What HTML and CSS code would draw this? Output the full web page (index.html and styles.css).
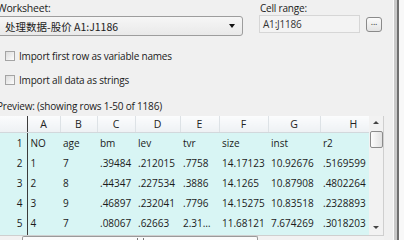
FILE: index.html
```html
<!DOCTYPE html>
<html lang="en">
<head>
    <meta charset="UTF-8">
    <title>Import Excel - Preview</title>
    <link rel="stylesheet" href="styles.css">
</head>
<body>
    <div class="main">
        <div class="top">
            <div class="sheet-field">
                <div class="label">Worksheet:</div>
                <div class="combo">
                    <span class="combo-text">处理数据-股价 A1:J1186</span>
                    <span class="combo-arrow"></span>
                </div>
            </div>
            <div class="range-field">
                <div class="label">Cell range:</div>
                <div class="range-row">
                    <div class="textbox">A1:J1186</div>
                    <div class="dots">...</div>
                </div>
            </div>
        </div>

        <div class="checks">
            <div class="check"><span class="box"></span>Import first row as variable names</div>
            <div class="check"><span class="box"></span>Import all data as strings</div>
        </div>

        <div class="label preview">Preview: (showing rows 1-50 of 1186)</div>

        <div class="grid-wrap">
            <div class="grid">
                <table>
                    <colgroup>
                        <col class="c-row"><col class="c-a"><col class="c-b"><col class="c-c"><col class="c-d">
                        <col class="c-e"><col class="c-f"><col class="c-g"><col class="c-h">
                    </colgroup>
                    <thead>
                        <tr>
                            <th class="corner"></th>
                            <th>A</th><th>B</th><th>C</th><th>D</th><th>E</th><th>F</th><th>G</th><th>H</th>
                        </tr>
                    </thead>
                    <tbody>
                        <tr><td class="rn">1</td><td>NO</td><td>age</td><td>bm</td><td>lev</td><td class="narrow">tvr</td><td>size</td><td>inst</td><td>r2</td></tr>
                        <tr><td class="rn">2</td><td>1</td><td>7</td><td>.39484</td><td>.212015</td><td class="narrow">.7758</td><td>14.17123</td><td>10.92676</td><td>.5169599</td></tr>
                        <tr><td class="rn">3</td><td>2</td><td>8</td><td>.44347</td><td>.227534</td><td class="narrow">.3886</td><td>14.1265</td><td>10.87908</td><td>.4802264</td></tr>
                        <tr><td class="rn">4</td><td>3</td><td>9</td><td>.46897</td><td>.232041</td><td class="narrow">.7796</td><td>14.15275</td><td>10.83518</td><td>.2328893</td></tr>
                        <tr><td class="rn">5</td><td>4</td><td>7</td><td>.08067</td><td>.62663</td><td class="narrow">2.318864</td><td>11.68121</td><td>7.674269</td><td>.3018203</td></tr>
                        <tr><td class="rn">6</td><td>5</td><td>8</td><td>.10236</td><td>.58314</td><td class="narrow">1.9021</td><td>11.70442</td><td>7.70213</td><td>.2711453</td></tr>
                    </tbody>
                </table>
            </div>
            <div class="vscroll">
                <span class="arr up"></span>
                <span class="thumb"></span>
                <span class="arr down"></span>
            </div>
        </div>

        <div class="hscroll">
            <span class="h-left"></span>
            <span class="h-thumb"><span class="grip"></span></span>
        </div>
    </div>

    <div class="splitter">
        <span class="sp-light"></span>
        <span class="sp-gray"></span>
        <span class="sp-dark"></span>
        <span class="sp-rest"></span>
    </div>
</body>
</html>
```

FILE: styles.css
```css
body {
    margin: 0;
    width: 404px;
    height: 240px;
    overflow: hidden;
    display: flex;
    background-color: #f0f0f0;
    font-family: "Open Sans", "Noto Sans", sans-serif;
    font-size: 10px;
    letter-spacing: -0.2px;
    color: #1b1b1b;
}
.main {
    width: 384px;
    flex: none;
    display: flex;
    flex-direction: column;
}
.label {
    line-height: 14px;
    height: 14px;
    white-space: nowrap;
}

/* top: worksheet + cell range */
.top {
    display: flex;
    height: 40px;
}
.sheet-field {
    width: 246px;
    margin-left: -3px;
    padding-top: 1px;
}
.sheet-field > .label {
    font-size: 10.5px;
}
.combo {
    margin-top: 1px;
    height: 18px;
    border: 1px solid #9d9d9d;
    border-radius: 3px;
    background: linear-gradient(#f6f6f6, #e9e9e9);
    display: flex;
    align-items: center;
    padding-left: 7px;
    padding-right: 7px;
}
.combo-text {
    flex: 1;
    font-family: "Noto Sans CJK SC", "Open Sans", sans-serif;
    font-size: 10.5px;
    letter-spacing: 0;
    white-space: nowrap;
}
.combo-arrow {
    width: 0;
    height: 0;
    border-left: 3px solid transparent;
    border-right: 3px solid transparent;
    border-top: 4px solid #111;
}
.range-field {
    margin-left: 16px;
    padding-top: 1px;
}
.range-field .label {
    padding-left: 1px;
}
.range-row {
    display: flex;
    align-items: center;
    height: 18px;
}
.textbox {
    width: 96px;
    height: 16px;
    line-height: 16px;
    padding-left: 3px;
    border: 1px solid #d6d6d6;
    background-color: #f3f3f3;
    color: #333;
}
.dots {
    margin-left: 6px;
    width: 14px;
    height: 13px;
    border: 1px solid #8a8a8a;
    border-radius: 3px;
    background: linear-gradient(#fbfbfb, #e3e3e3);
    font-size: 9px;
    line-height: 8px;
    text-align: center;
    color: #333;
}

/* checkboxes */
.checks {
    margin-top: 5px;
    padding-left: 5px;
}
.check {
    height: 24px;
    display: flex;
    align-items: center;
}
.box {
    width: 8px;
    height: 8px;
    border: 1px solid #a4a4a4;
    background: linear-gradient(135deg, #dcdcdc, #fdfdfd);
    margin-right: 4px;
}
.preview {
    margin-top: 7px;
    margin-left: -3px;
}

/* grid */
.grid-wrap {
    margin-top: 3px;
    height: 119px;
    display: flex;
    border-right: 1px solid #cfcfcf;
}
.grid {
    width: 369px;
    overflow: hidden;
    background-color: #d8f5f4;
}
table {
    border-collapse: collapse;
    table-layout: fixed;
    width: 386px;
    font-size: 10px;
    letter-spacing: 0;
}
.c-row { width: 27px; }
.c-a { width: 33px; }
.c-b { width: 37px; }
.c-c { width: 38px; }
.c-d { width: 45px; }
.c-e { width: 39px; }
.c-f { width: 49px; }
.c-g { width: 52px; }
.c-h { width: 66px; }
th {
    height: 16px;
    font-weight: normal;
    font-size: 10.5px;
    text-align: center;
    color: #222;
    background: linear-gradient(#fbfcfd, #eef1f4);
    border-left: 1px solid #dde2e6;
    border-bottom: 1px solid #d2d8dc;
    padding: 0;
}
th.corner {
    border-left: none;
    border-right: 1px solid #3c3c3c;
}
td {
    height: 20px;
    padding: 0 0 0 3px;
    white-space: nowrap;
    overflow: hidden;
    text-overflow: ellipsis;
}
td.narrow {
    padding-right: 4px;
}
td:last-child {
    text-overflow: clip;
}
td.rn {
    text-align: right;
    padding: 0 4px 0 0;
    border-right: 1px solid #3c3c3c;
}

/* scrollbars */
.vscroll {
    width: 14px;
    background-color: #f2f2f2;
    display: flex;
    flex-direction: column;
    align-items: center;
}
.arr {
    width: 0;
    height: 0;
    border-left: 3px solid transparent;
    border-right: 3px solid transparent;
}
.arr.up {
    margin-top: 5px;
    border-bottom: 3px solid #444;
}
.arr.down {
    margin-top: auto;
    margin-bottom: 6px;
    border-top: 3px solid #444;
}
.thumb {
    margin-top: 7px;
    width: 11px;
    height: 15px;
    border: 1px solid #8c8c8c;
    border-radius: 2px;
    background: linear-gradient(90deg, #fdfdfd, #e2e2e2);
}
.hscroll {
    height: 4px;
    display: flex;
    background-color: #f2f2f2;
    border-top: 1px solid #cfcfcf;
}
.h-left {
    width: 22px;
}
.h-thumb {
    width: 234px;
    border: 1px solid #9a9a9a;
    border-bottom: none;
    border-radius: 2px 2px 0 0;
    background-color: #fbfbfb;
    display: flex;
    justify-content: center;
}
.grip {
    margin-top: 1px;
    width: 5px;
    height: 3px;
    border-left: 1px solid #777;
    border-right: 1px solid #777;
}

/* panel splitter on the right */
.splitter {
    flex: 1;
    display: flex;
}
.sp-light {
    width: 9px;
    background-color: #f0f0f0;
    border-right: 1px solid #fbfbfb;
}
.sp-gray {
    width: 3px;
    background-color: #c9c9c9;
}
.sp-dark {
    width: 2px;
    background-color: #707070;
}
.sp-rest {
    flex: 1;
    background-color: #f8f8f8;
}
```
